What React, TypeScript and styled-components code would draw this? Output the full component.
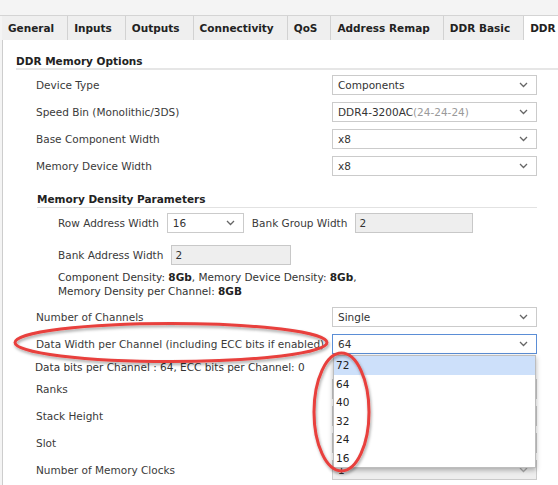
import React from "react";
import styled, { createGlobalStyle } from "styled-components";

const Global = createGlobalStyle`
  html, body { margin: 0; padding: 0; background: #fff; }
  body { font-family: "DejaVu Sans", Verdana, sans-serif; }
`;

const Page = styled.div`
  position: relative;
  width: 558px;
  height: 485px;
  overflow: hidden;
  background: #f4f4f4;
  color: #333;
  font-family: "DejaVu Sans", Verdana, sans-serif;
`;

const TopStrip = styled.div`
  height: 15px;
  border-bottom: 1px solid #d4d4d4;
`;

const TabBar = styled.div`
  display: flex;
  height: 24px;
  margin-left: 2px;
  background: #efefef;
  overflow: hidden;
`;

const Tab = styled.div<{ $active?: boolean }>`
  display: flex;
  align-items: center;
  flex: none;
  padding: 0 13px 0 6px;
  border-right: ${(p) => (p.$active ? "none" : "1px solid #d2d2d2")};
  background: ${(p) => (p.$active ? "#fff" : "transparent")};
  font-size: 10.5px;
  font-weight: bold;
  color: #222;
  white-space: nowrap;
`;

const Content = styled.div`
  height: 445px;
  box-sizing: border-box;
  margin-left: 2px;
  border-left: 1px solid #cdcdcd;
  background: #fff;
  padding: 14px 0 0 13px;
`;

const SectionTitle = styled.div<{ $inset?: boolean }>`
  font-size: 10.5px;
  font-weight: bold;
  color: #222;
  line-height: 14px;
  border-bottom: ${(p) => (p.$inset ? "1px solid #e2e2e2" : "2px solid #e6e6e6")};
  margin: ${(p) => (p.$inset ? "16px 21px 0 1px" : "0")};
  padding-bottom: ${(p) => (p.$inset ? "1px" : "0")};
`;

const Body = styled.div`
  display: flex;
  flex-direction: column;
  padding-left: 20px;
  margin-top: 5px;
`;

const Row = styled.div<{ $gap?: number }>`
  display: grid;
  grid-template-columns: 1fr 205px;
  align-items: center;
  height: 20px;
  margin-right: 21px;
  margin-top: ${(p) => p.$gap ?? 7}px;
  &:first-child {
    margin-top: 0;
  }
`;

const Label = styled.span`
  font-size: 10.5px;
  color: #3a3a3a;
  white-space: nowrap;
`;

const SubBody = styled.div`
  display: flex;
  flex-direction: column;
  padding-left: 22px;
  margin-top: 5px;
`;

const InlineRow = styled.div<{ $gap?: number }>`
  display: flex;
  align-items: center;
  gap: 8px;
  height: 20px;
  margin-top: ${(p) => p.$gap ?? 0}px;
`;

const Note = styled.div<{ $gap?: number; $shift?: number }>`
  font-size: 10.5px;
  line-height: 14px;
  color: #333;
  margin-top: ${(p) => p.$gap ?? 0}px;
  margin-left: ${(p) => p.$shift ?? 0}px;
  white-space: nowrap;
  b {
    color: #222;
  }
`;

const SelectBox = styled.div<{ $focused?: boolean; $disabled?: boolean; $width?: number }>`
  position: relative;
  box-sizing: border-box;
  height: 20px;
  width: ${(p) => (p.$width ? `${p.$width}px` : "100%")};
  display: flex;
  align-items: center;
  justify-content: space-between;
  padding: 0 8px 0 5px;
  border: 1px solid ${(p) => (p.$focused ? "#5b8ed6" : "#cbcbcb")};
  background: ${(p) => (p.$disabled ? "#eeeeee" : "#fff")};
  font-size: 10.5px;
  color: #333;
  white-space: nowrap;
`;

const Muted = styled.span`
  color: #9a9a9a;
`;

const TextField = styled.div<{ $width: number }>`
  box-sizing: border-box;
  height: 20px;
  width: ${(p) => p.$width}px;
  display: flex;
  align-items: center;
  padding-left: 3px;
  border: 1px solid #c8c8c8;
  background: #eeeeee;
  font-size: 10.5px;
  color: #333;
`;

const DropList = styled.div`
  position: absolute;
  left: 0;
  right: 0;
  top: calc(100% + 2px);
  z-index: 5;
  background: #fff;
  border: 1px solid #bdbdbd;
  box-shadow: 0 2px 5px rgba(0, 0, 0, 0.3);
`;

const DropItem = styled.div<{ $active?: boolean }>`
  height: 18.5px;
  display: flex;
  align-items: center;
  padding-left: 2px;
  font-size: 10.5px;
  color: #222;
  background: ${(p) => (p.$active ? "#cde0fa" : "transparent")};
`;

const Overlay = styled.svg`
  position: absolute;
  left: 0;
  top: 0;
  width: 558px;
  height: 485px;
  pointer-events: none;
  z-index: 10;
`;

const Chevron = ({ faded }: { faded?: boolean }) => (
  <svg width="9" height="6" viewBox="0 0 9 6">
    <path d="M1 1 L4.5 4.5 L8 1" fill="none" stroke={faded ? "#aaa" : "#666"} strokeWidth="1.3" />
  </svg>
);

const Select = ({
  children,
  focused,
  disabled,
  width,
  list,
}: {
  children?: React.ReactNode;
  focused?: boolean;
  disabled?: boolean;
  width?: number;
  list?: string[];
}) => (
  <SelectBox $focused={focused} $disabled={disabled} $width={width}>
    <span>{children}</span>
    <Chevron faded={disabled} />
    {list && (
      <DropList>
        {list.map((v, i) => (
          <DropItem key={v} $active={i === 0}>
            {v}
          </DropItem>
        ))}
      </DropList>
    )}
  </SelectBox>
);

const tabs = ["General", "Inputs", "Outputs", "Connectivity", "QoS", "Address Remap", "DDR Basic"];

export default function App() {
  return (
    <>
      <Global />
      <Page>
        <TopStrip />
        <TabBar>
          {tabs.map((t) => (
            <Tab key={t}>{t}</Tab>
          ))}
          <Tab $active>DDR Memory</Tab>
        </TabBar>
        <Content>
          <SectionTitle>DDR Memory Options</SectionTitle>
          <Body>
            <Row>
              <Label>Device Type</Label>
              <Select>Components</Select>
            </Row>
            <Row>
              <Label>Speed Bin (Monolithic/3DS)</Label>
              <Select>
                DDR4-3200AC<Muted>(24-24-24)</Muted>
              </Select>
            </Row>
            <Row>
              <Label>Base Component Width</Label>
              <Select>x8</Select>
            </Row>
            <Row>
              <Label>Memory Device Width</Label>
              <Select>x8</Select>
            </Row>

            <SectionTitle $inset>Memory Density Parameters</SectionTitle>
            <SubBody>
              <InlineRow>
                <Label>Row Address Width</Label>
                <Select width={77}>16</Select>
                <Label>Bank Group Width</Label>
                <TextField $width={118}>2</TextField>
              </InlineRow>
              <InlineRow $gap={12}>
                <Label>Bank Address Width</Label>
                <TextField $width={120}>2</TextField>
              </InlineRow>
              <Note $gap={5}>
                Component Density: <b>8Gb</b>, Memory Device Density: <b>8Gb</b>,
              </Note>
              <Note>
                Memory Density per Channel: <b>8GB</b>
              </Note>
            </SubBody>

            <Row $gap={9}>
              <Label>Number of Channels</Label>
              <Select>Single</Select>
            </Row>
            <Row>
              <Label>Data Width per Channel (including ECC bits if enabled)</Label>
              <Select focused list={["72", "64", "40", "32", "24", "16"]}>
                64
              </Select>
            </Row>
            <Note $gap={6} $shift={-1}>
              Data bits per Channel : 64, ECC bits per Channel: 0
            </Note>
            <Row $gap={5}>
              <Label>Ranks</Label>
              <Select />
            </Row>
            <Row>
              <Label>Stack Height</Label>
              <Select />
            </Row>
            <Row>
              <Label>Slot</Label>
              <Select />
            </Row>
            <Row>
              <Label>Number of Memory Clocks</Label>
              <Select disabled>1</Select>
            </Row>
          </Body>
        </Content>
        <Overlay viewBox="0 0 558 485">
          <defs>
            <filter id="sh" x="-20%" y="-20%" width="140%" height="140%">
              <feDropShadow dx="1" dy="2" stdDeviation="1.5" floodColor="#000" floodOpacity="0.35" />
            </filter>
          </defs>
          <ellipse cx="171" cy="342.5" rx="156" ry="19" fill="none" stroke="#e8403d" strokeWidth="3" filter="url(#sh)" />
          <ellipse cx="341.5" cy="412" rx="27.5" ry="59" fill="none" stroke="#e8403d" strokeWidth="3" filter="url(#sh)" />
        </Overlay>
      </Page>
    </>
  );
}
